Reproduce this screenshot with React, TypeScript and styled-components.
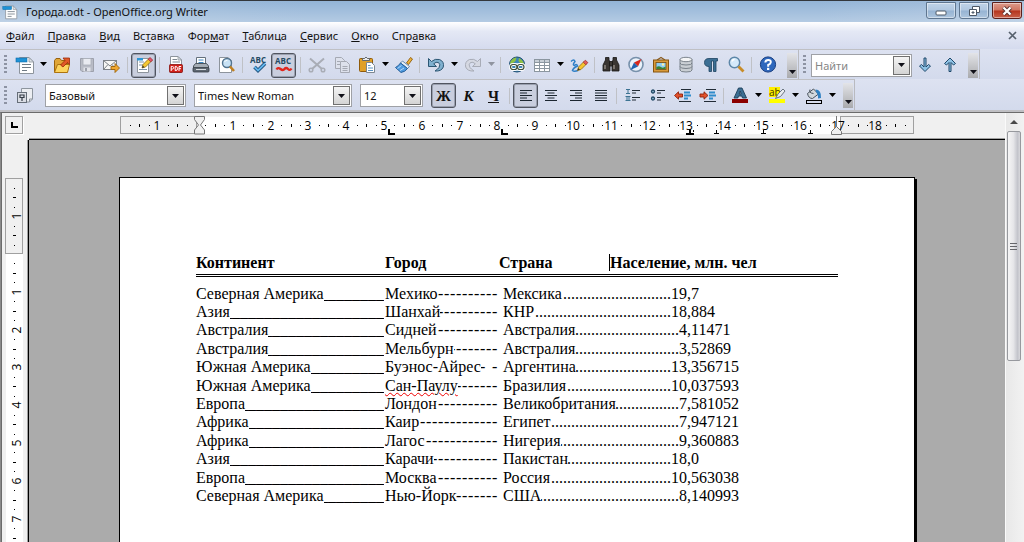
import React from "react";
import styled, { createGlobalStyle, css } from "styled-components";

const GlobalStyle = createGlobalStyle`
  * { box-sizing: border-box; }
  html, body { margin: 0; height: 100%; }
  body { font: 12px/16px "Noto Sans", "Open Sans", sans-serif; color: #101018; background: #f0f0f0; }
  button, input, select { font: inherit; color: inherit; }
`;

const Window = styled.div`
  display: flex;
  flex-direction: column;
  height: 100vh;
  overflow: hidden;
`;

const TitleBar = styled.header`
  display: flex;
  flex: none;
  height: 22px;
  padding: 0 2px;
  border-top: 1px solid #33373c;
  background: linear-gradient(to bottom, rgba(255, 255, 255, 0), rgba(255, 255, 255, 0.3)),
    linear-gradient(to right, #a3bedb, #93b4d7 30%, #93b4d7 80%, #a6c0dc);
`;

const Title = styled.h1`
  display: flex;
  align-items: center;
  gap: 8px;
  flex: 1;
  margin: 0;
  font-size: 11px;
  font-weight: 400;
  line-height: 20px;
  color: #111;
`;

const WindowButtons = styled.div`
  display: flex;
  gap: 3px;
  padding-top: 1px;
`;

const WindowButton = styled.button<{ $close?: boolean }>`
  width: 30px;
  height: 17px;
  padding: 0;
  border: 1px solid ${(p) => (p.$close ? "#5b1f1b" : "#5f7690")};
  border-radius: 0 0 3px 3px;
  box-shadow: inset 0 0 0 1px rgba(255, 255, 255, 0.45);
  background: ${(p) =>
    p.$close
      ? "linear-gradient(#dc9a8b, #cf7460 48%, #b5341d 52%, #c8614a)"
      : "linear-gradient(#c0d3e8, #b0c7e0 48%, #96b3d3 52%, #adc5de)"};
  svg { display: block; margin: auto; }
`;

const MenuBar = styled.nav`
  display: flex;
  flex: none;
  align-items: center;
  gap: 13px;
  height: 27px;
  padding: 0 7px 0 6px;
  background: linear-gradient(#ffffff, #e4e8f5 35%, #d5dbee);
`;

const MenuItem = styled.button`
  padding: 0;
  border: 0;
  background: none;
  font-size: 11px;
  color: #111;
`;

const CloseDocument = styled(MenuItem)`
  display: flex;
  margin-left: auto;
`;

const ToolRow = styled.div<{ $lower?: boolean }>`
  display: flex;
  flex: none;
  height: ${(p) => (p.$lower ? 31 : 30)}px;
  background: linear-gradient(#dde2f1, #d3daec);
`;

const Toolbar = styled.div`
  display: flex;
  align-items: center;
  padding: 1px 1px 0 4px;
  border-top: 1px solid #bfc0c4;
  border-right: 1px solid #b9babf;
`;

const Grip = styled.span`
  width: 3px;
  height: 20px;
  margin-right: 5px;
  background: repeating-linear-gradient(#8d93a3 0 2px, transparent 2px 4px);
`;

const ToolButton = styled.button<{ $pressed?: boolean; $space?: number }>`
  display: flex;
  flex: none;
  align-items: center;
  justify-content: center;
  width: 25px;
  height: 25px;
  margin-right: ${(p) => p.$space ?? 0}px;
  padding: 0;
  border: 1px solid transparent;
  border-radius: 3px;
  background: none;
  color: #111;
  ${(p) =>
    p.$pressed &&
    css`
      border-color: #50545f;
      background: #c9cede;
      box-shadow: inset 0 0 0 1px #9aa0af;
    `}
`;

const LetterButton = styled(ToolButton)<{ $italic?: boolean; $underline?: boolean }>`
  font: ${(p) => (p.$italic ? "italic" : "normal")} bold 15px/20px "Liberation Serif", serif;
  text-decoration: ${(p) => (p.$underline ? "underline" : "none")};
`;

const CaretButton = styled.button<{ $disabled?: boolean }>`
  display: flex;
  flex: none;
  align-items: center;
  justify-content: center;
  width: 12px;
  height: 25px;
  padding: 0 0 2px;
  border: 0;
  background: none;
  color: ${(p) => (p.$disabled ? "#8f949f" : "#000")};
`;

const Separator = styled.span<{ $wide?: boolean }>`
  flex: none;
  width: 1px;
  height: 16px;
  margin: 0 3px 0 ${(p) => (p.$wide ? 4 : 3)}px;
  background: #bfc1c6;
`;

const Overflow = styled.button<{ $gap: number }>`
  display: flex;
  flex: none;
  align-items: flex-end;
  justify-content: center;
  width: 10px;
  height: 25px;
  margin-left: ${(p) => p.$gap}px;
  padding: 0 0 4px;
  border: 0;
  background: linear-gradient(#e3e4e8, #a9aaad);
`;

const Combo = styled.div<{ $width: number; $gap?: number }>`
  position: relative;
  flex: none;
  width: ${(p) => p.$width}px;
  height: 23px;
  margin-right: ${(p) => p.$gap ?? 8}px;
  border: 1px solid #9fa1a6;
  background: #fff;
`;

const Field = styled.select`
  width: 100%;
  height: 21px;
  padding: 0 20px 0 3px;
  border: 0;
  appearance: none;
  background: none;
  font-size: 11px;
  line-height: 20px;
  color: #111;
`;

const SearchField = styled.input`
  width: 100%;
  height: 21px;
  padding: 0 20px 0 3px;
  border: 0;
  background: none;
  font-size: 11px;
  &::placeholder { color: #868686; opacity: 1; }
`;

const ComboArrow = styled.span`
  position: absolute;
  top: 1px;
  right: 1px;
  bottom: 1px;
  display: flex;
  align-items: center;
  justify-content: center;
  width: 17px;
  border: 1px solid #707070;
  background: linear-gradient(#f4f4f4, #d4d4d4);
  pointer-events: none;
`;

const BodyEdge = styled.div`
  flex: none;
  height: 2px;
  background: #c0c0c4;
`;

const Body = styled.main`
  display: grid;
  flex: 1;
  min-height: 0;
  grid-template-columns: 28px minmax(0, 1fr) 19px;
  grid-template-rows: 27px minmax(0, 1fr);
  border-top: 1px solid #6b6b6b;
  border-left: 1px solid #8a8a8a;
  background: #f0f0f0;
`;

const Corner = styled.div`
  padding: 3px 0 0 3px;
  border-left: 1px solid #6b6b6b;
`;

const TabTypeButton = styled.button`
  display: flex;
  align-items: center;
  justify-content: center;
  width: 18px;
  height: 18px;
  padding: 0;
  border: 1px solid #a0a0a0;
  box-shadow: 1px 1px 0 #fff;
  background: #f0f0f0;
`;

const TopRuler = styled.div`
  display: flex;
  justify-content: center;
  padding-top: 3px;
  border-bottom: 1px solid #000;
  box-shadow: inset 0 -1px 0 #a0a0a0;
  svg { flex: none; }
`;

const SideRuler = styled.div`
  overflow: hidden;
  padding: 38px 0 0 3px;
  border-left: 1px solid #6b6b6b;
  border-right: 1px solid #000;
  box-shadow: inset -1px 0 0 #a0a0a0;
  svg { display: block; }
`;

const Workspace = styled.div`
  display: flex;
  justify-content: center;
  align-items: flex-start;
  overflow: hidden;
  padding-top: 37px;
  background: #ababab;
`;

const Paper = styled.article`
  flex: none;
  width: 796px;
  min-height: 1123px;
  padding: 76px;
  border: 1px solid #000;
  box-shadow: 2px 2px 0 #000;
  background: #fff;
  color: #000;
  font: 16px/18px "Liberation Serif", serif;
`;

const Scroll = styled.div`
  grid-column: 3;
  grid-row: 1 / 3;
  display: flex;
  flex-direction: column;
  padding: 0 3px 0 1px;
  border-left: 1px solid #fafafa;
  background: linear-gradient(to right, #e8e8e8, #f2f2f2);
`;

const ScrollUp = styled.button`
  display: flex;
  align-items: center;
  justify-content: center;
  height: 18px;
  padding: 0;
  border: 0;
  background: none;
`;

const ScrollThumb = styled.div`
  display: flex;
  align-items: center;
  justify-content: center;
  height: 230px;
  border: 1px solid #97999e;
  border-radius: 2px;
  background: linear-gradient(to right, #f5f5f5, #e6e6e9 45%, #c3c4cb 80%, #d8d8dc);
`;

const CityTable = styled.table`
  width: 100%;
  border-collapse: collapse;
  table-layout: fixed;
  th, td { padding: 0; font-size: 16px; text-align: left; white-space: nowrap; vertical-align: top; }
  th { height: 21px; line-height: 18px; border-bottom: 3px double #000; }
  tbody tr { height: 18px; }
  tbody tr:nth-child(5n), tbody tr:nth-child(5n + 3) { height: 19px; }
  tbody::before { content: ""; display: table-row; height: 10px; }
`;

const Column = styled.col<{ $width?: number }>`
  width: ${(p) => (p.$width ? `${p.$width}px` : "auto")};
`;

const Tabbed = styled.div<{ $start?: number; $end?: number }>`
  display: flex;
  height: 18px;
  padding: 0 ${(p) => p.$end ?? 0}px 0 ${(p) => p.$start ?? 0}px;
`;

const Leader = styled.span`
  display: flex;
  flex: 1 1 0;
  min-width: 0;
  overflow: hidden;
  justify-content: flex-end;
`;

const DashMark = styled.span`
  flex: none;
  width: 6px;
  white-space: pre;
`;

const Whole = styled.span`
  display: flex;
  flex: none;
  justify-content: flex-end;
  width: 16px;
`;

const InsertionPoint = styled.span`
  display: inline-block;
  width: 1px;
  height: 17px;
  margin: 0 0 0 -1px;
  vertical-align: top;
  background: #000;
`;

const Misspelled = styled.span`
  text-decoration: underline wavy #f00000 1px;
  text-underline-offset: 1px;
`;

const Triangle = () => (
  <svg width="7" height="4" viewBox="0 0 7 4" aria-hidden="true">
    <path d="M0 0H7L3.5 4Z" fill="currentColor" />
  </svg>
);

const Glyph = ({ children, size = 20 }: { children: React.ReactNode; size?: number }) => (
  <svg width={size} height={size} viewBox="0 0 20 20" fill="none" aria-hidden="true">
    {children}
  </svg>
);

const sheet = (
  <>
    <path d="M4.500 2.500H14L18.500 7V18.500H4.500Z" fill="#fff" stroke="#8d949c" />
    <path d="M14 2.500V7H18.500Z" fill="#dfe4e8" stroke="#8d949c" strokeWidth=".8" />
    <path d="M7 9.500H16M7 12.500H16M7 15.500H12" stroke="#6f7a84" />
    <rect x="1" y="3" width="11" height="4" fill="#1e92d6" stroke="#0e6ca8" strokeWidth=".6" />
  </>
);

const page = (
  <>
    <path d="M3.500 2.500H12L15.500 6V17.500H3.500Z" fill="#fff" stroke="#8d949c" />
    <path d="M12 2.500V6H15.500Z" fill="#dfe4e8" stroke="#8d949c" strokeWidth=".8" />
  </>
);

const icons: Record<string, React.ReactNode> = {
  new: sheet,
  open: (
    <>
      <path d="M2.500 17V5.500L4 3.500H8L9.500 5.500H15.500V17Z" fill="#e0a637" stroke="#99620e" />
      <path d="M2.500 17.500L5.500 9.500H17.500L15.500 17.500Z" fill="#fcd45e" stroke="#ad740f" />
      <path d="M8.500 10L13 5.500L11 3H17.500V9.500L15.500 7.500L11 12Z" fill="#e05a28" stroke="#9c2a08" strokeWidth=".8" />
    </>
  ),
  save: (
    <>
      <path d="M3.500 3.500H16.500V16.500H5L3.500 15Z" fill="#b9bcc6" stroke="#9da1ac" />
      <rect x="6" y="3.500" width="8" height="6.500" fill="#e9ebf1" stroke="#a9adb6" strokeWidth=".8" />
      <rect x="6.500" y="12.500" width="7" height="4" fill="#e2e4ea" />
      <rect x="8" y="13" width="2" height="3" fill="#9da1ac" />
    </>
  ),
  mail: (
    <>
      <rect x="1.500" y="5.500" width="13" height="9" fill="#f7f7f5" stroke="#7d8288" />
      <path d="M1.500 5.500L8 11L14.500 5.500M1.500 14.500L6 9.500M14.500 14.500L10 9.500" stroke="#7d8288" />
      <path d="M9 11.500H13V8.500L17.500 13L13 17.500V14.500H9Z" fill="#f0a830" stroke="#9c6208" strokeWidth=".9" />
    </>
  ),
  edit: (
    <>
      <path d="M3.500 3.500H14.500V17.500H3.500Z" fill="#fff" stroke="#8d949c" />
      <path d="M5 7H10M5 10H9M5 14.500H13" stroke="#7b93ab" />
      <rect x="3" y="3" width="6" height="2.500" fill="#2d95d4" />
      <path d="M8 13L9 9.500L15.500 3L18 5.500L11.500 12Z" fill="#f5c832" stroke="#8d6b10" strokeWidth=".8" />
      <path d="M14.200 4.300L16 2.500L18.700 5L16.800 6.800Z" fill="#e4566e" stroke="#9c2236" strokeWidth=".7" />
      <path d="M8 13L8.800 10.500L10.500 12.200Z" fill="#333" />
    </>
  ),
  pdf: (
    <>
      <path d="M4.500 1.500H12L15.500 5V17.500H4.500Z" fill="#fff" stroke="#8d949c" />
      <path d="M12 1.500V5H15.500Z" fill="#dfe4e8" stroke="#8d949c" strokeWidth=".8" />
      <path d="M6.500 4.500H11M6.500 7H14" stroke="#7e8891" />
      <rect x="3.500" y="9.500" width="13" height="8" rx="1" fill="#d1201a" stroke="#86100c" strokeWidth=".8" />
      <path
        d="M5.200 16V11.500H6.500Q7.700 11.500 7.700 12.700T6.500 14H5.200M9.200 11.500V15.500H10Q11.500 15.400 11.500 13.600T10 11.500ZM13 16V11.500H15.200M13 13.700H15"
        stroke="#fff"
        strokeWidth="1"
      />
    </>
  ),
  print: (
    <>
      <path d="M5.500 9V2.500H14.500V9" fill="#fff" stroke="#65717d" />
      <path d="M7.500 5H12.500M7.500 7.500H12.500" stroke="#3f86c0" />
      <path d="M2.500 15V11L4.500 8.500H15.500L17.500 11V15Z" fill="#a5adb5" stroke="#4d565f" />
      <rect x="2" y="12.500" width="16" height="4.500" rx="1" fill="#5f6872" stroke="#363d45" strokeWidth=".8" />
      <path d="M5 14.500H15" stroke="#d9dee2" />
    </>
  ),
  preview: (
    <>
      {page}
      <circle cx="11" cy="8" r="4.500" fill="#c8e2f5" stroke="#51738f" strokeWidth="1.400" />
      <path d="M14 11.500L18 16" stroke="#c08022" strokeWidth="2.600" />
      <path d="M8.500 7Q9.500 5 11.500 5.200" stroke="#fff" />
    </>
  ),
  cut: (
    <g stroke="#a9adb6">
      <path d="M3 3.500L15 14M17 3.500L5 14" strokeWidth="2" />
      <circle cx="4" cy="15" r="1.800" strokeWidth="1.500" />
      <circle cx="16" cy="15" r="1.800" strokeWidth="1.500" />
    </g>
  ),
  copy: (
    <g stroke="#a5a9b3" fill="#dde1ec">
      <path d="M3.500 2.500H9.500L12.500 5.500V13.500H3.500Z" />
      <path d="M8.500 6.500H14.500L17.500 9.500V17.500H8.500Z" />
      <path d="M5 6.500H8M5 9.500H8M10.500 11.500H15.500M10.500 13.500H15.500M10.500 15.500H15.500" />
    </g>
  ),
  paste: (
    <>
      <rect x="2.500" y="3.500" width="13" height="13" rx="1" fill="#e0a028" stroke="#8f5b0a" />
      <path d="M5.500 5.500V3.500H7.500Q9 .500 10.500 3.500H12.500V5.500Z" fill="#e9ebee" stroke="#565d66" strokeWidth=".9" />
      <path d="M9.500 7.500H14.500L17.500 10.500V17.500H9.500Z" fill="#fff" stroke="#7d8790" />
      <path d="M11 10.500H13.500M11 13H16M11 15.500H16" stroke="#5a93c4" />
    </>
  ),
  brush: (
    <>
      <path d="M12.500 8L16.500 2.500L18.500 4L14.500 9.500Z" fill="#f0b63c" stroke="#8f5b0a" strokeWidth=".9" />
      <path d="M8.500 6L15.500 11.500L13.500 13.500L6.500 8Z" fill="#e6eef6" stroke="#4874a0" strokeWidth=".8" />
      <path d="M6.500 8L13.500 13.500Q11 17 7 17.500L1.500 12.500Q4.500 11 6.500 8Z" fill="#4f9be0" stroke="#1c5590" strokeWidth=".9" />
      <path d="M3.500 13.500L7.500 10.500M6 15.500L10 13" stroke="#b8dafa" />
    </>
  ),
  undo: (
    <path
      d="M2.500 3.500V11.500H10.500L7.700 8.800Q10 6.500 12.500 7.500Q15 9.500 13 12.500Q12 14 9 16Q15.500 16.500 17.300 12Q18.500 6.500 13.500 4.500Q9 3.300 5.500 6.500Z"
      fill="#7fb0cf"
      stroke="#2c5673"
    />
  ),
  redo: (
    <path
      d="M17.500 3.500V11.500H9.500L12.300 8.800Q10 6.500 7.500 7.500Q5 9.500 7 12.500Q8 14 11 16Q4.500 16.500 2.700 12Q1.500 6.500 6.500 4.500Q11 3.300 14.500 6.500Z"
      fill="#d5d8e2"
      stroke="#a8acb7"
    />
  ),
  link: (
    <>
      <circle cx="10" cy="9.500" r="7.500" fill="#3e86b6" stroke="#1d4c70" />
      <path d="M3.500 6.500Q6 2.500 9.500 2.500L8.500 6L5.500 8.500L3 9ZM12 3Q16 5 17 9L13.500 8.500L11.500 6Z" fill="#8fc043" />
      <rect x="3.500" y="9.500" width="7" height="5" rx="2.500" stroke="#fff" strokeWidth="3" />
      <rect x="10" y="9.500" width="7" height="5" rx="2.500" stroke="#fff" strokeWidth="3" />
      <rect x="3.500" y="9.500" width="6.500" height="5" rx="2.500" stroke="#3f4f3a" strokeWidth="1.200" />
      <rect x="10.500" y="9.500" width="6.500" height="5" rx="2.500" stroke="#3f4f3a" strokeWidth="1.200" />
    </>
  ),
  table: (
    <>
      <rect x="2.500" y="4.500" width="15" height="12" fill="#fff" stroke="#8b969f" />
      <rect x="3" y="5" width="14" height="2" fill="#c8cfd6" />
      <path d="M2.500 7.500H17.500M2.500 10.500H17.500M2.500 13.500H17.500M7.500 4.500V16.500M12.500 4.500V16.500" stroke="#8b969f" />
    </>
  ),
  draw: (
    <>
      <path d="M2 6.500Q5 3.500 6 6.500Q3 10 5.500 10.500Q8 8.500 8.500 11Q4 13 3.500 15.500Q5 17 9 15.500" stroke="#2f7fc6" strokeWidth="1.500" />
      <path d="M8.500 15.500L9.500 12L15 6.500L17.500 9L12 14.500Z" fill="#f6c530" stroke="#906a0e" strokeWidth=".8" />
      <path d="M14.300 7.200L16.300 5.200L18.900 7.600L16.800 9.700Z" fill="#e2605e" stroke="#9c2424" strokeWidth=".7" />
      <path d="M8.500 15.500L9.200 13L11 14.800Z" fill="#333" />
    </>
  ),
  find: (
    <g fill="#3a3632" stroke="#181614" strokeWidth=".8">
      <path d="M4.500 2.500H8V5L9 7V16H2V10L4.500 5Z" />
      <path d="M15.500 2.500H12V5L11 7V16H18V10L15.500 5Z" />
      <path d="M8.500 6.500H11.500V11H8.500Z" />
      <path d="M4 10V14M13 10V14" stroke="#a39c94" strokeWidth="1.200" />
    </g>
  ),
  compass: (
    <>
      <circle cx="10" cy="9.500" r="7" fill="#eaf2fa" stroke="#7791ab" strokeWidth="1.600" />
      <path d="M15.500 4L12 11.500L8 7.500Z" fill="#d8291c" />
      <path d="M4.500 15L8 7.500L12 11.500Z" fill="#2263ae" />
    </>
  ),
  gallery: (
    <>
      <path d="M6 5L10 2.500L14 5" stroke="#8a5a1c" strokeWidth="1.200" />
      <rect x="2.500" y="5" width="15" height="12" fill="#d99a3a" stroke="#85540f" />
      <rect x="5" y="7.500" width="10" height="7" fill="#8fcdf2" stroke="#74490c" strokeWidth=".8" />
      <path d="M5.400 12Q8 10.500 10 12T14.600 11.500V14.100H5.400Z" fill="#3d8230" />
      <circle cx="12" cy="9.500" r="1.200" fill="#fff3a0" />
    </>
  ),
  database: (
    <g fill="#dfe2e5" stroke="#6f7881" strokeWidth=".9">
      <path d="M4 4.500V15Q4 17 10 17T16 15V4.500Z" fill="#c9ced3" />
      <path d="M4 8Q4 10 10 10T16 8M4 11.500Q4 13.500 10 13.500T16 11.500" fill="none" />
      <ellipse cx="10" cy="4.500" rx="6" ry="2.200" fill="#f4f5f6" />
    </g>
  ),
  pilcrow: (
    <path d="M16.500 3.500H8Q3.500 3.500 3.500 7.500T8 11.500V16.500H10.500V6H12.500V16.500H15V6H16.500Z" fill="#3c6f94" stroke="#1d435f" strokeWidth=".8" />
  ),
  zoom: (
    <>
      <circle cx="8.500" cy="7.500" r="5.200" fill="#d5eafa" stroke="#5d87a8" strokeWidth="1.500" />
      <path d="M12.500 11.500L17.500 16.500" stroke="#c88c28" strokeWidth="2.800" />
      <path d="M5.800 6.500Q6.500 4.500 8.500 4.500" stroke="#fff" strokeWidth="1.300" />
    </>
  ),
  help: (
    <>
      <circle cx="10" cy="9.500" r="7.600" fill="#2f68bd" stroke="#173d80" />
      <path d="M7.300 7.500Q7.500 5 10.200 5T12.800 7.300Q12.700 8.800 10.200 10V11.700" stroke="#fff" strokeWidth="2" />
      <rect x="9" y="12.800" width="2.300" height="2.200" fill="#fff" />
    </>
  ),
  down: (
    <path d="M9 3H11V12L13.500 9.500L15.500 11L10 16.500L4.500 11L6.500 9.500L9 12Z" fill="#8fc3e6" stroke="#20486a" />
  ),
  up: (
    <path d="M9 16.500H11V7.500L13.500 10L15.500 8.500L10 3L4.500 8.500L6.500 10L9 7.500Z" fill="#8fc3e6" stroke="#20486a" />
  ),
  styles: (
    <>
      <path d="M6.500 2.500H17.500V13L14.500 16H6.500Z" fill="#eceef2" stroke="#8d959e" />
      <path d="M14.500 16V13H17.500" stroke="#8d959e" />
      <rect x="2.500" y="6.500" width="9" height="10" fill="#dadde4" stroke="#666e78" />
      <path d="M5 11.500V9H9V11.500ZM7 11.500V15" stroke="#343c46" strokeWidth="1.200" />
    </>
  ),
  alignLeft: <path d="M4 4.500H16M4 7H11M4 9.500H16M4 12H11M4 14.500H16" stroke="#1c2630" strokeWidth="1.200" />,
  alignCenter: <path d="M4 4.500H16M6.500 7H13.500M4 9.500H16M6.500 12H13.500M4 14.500H16" stroke="#1c2630" strokeWidth="1.200" />,
  alignRight: <path d="M4 4.500H16M9 7H16M4 9.500H16M9 12H16M4 14.500H16" stroke="#1c2630" strokeWidth="1.200" />,
  justify: <path d="M4 4.500H16M4 7H16M4 9.500H16M4 12H16M4 14.500H16" stroke="#1c2630" strokeWidth="1.200" />,
  numbered: (
    <>
      <path d="M3 3.500H7M5 3.500V7.500M3 7.500H7M2.500 10.500H7.500M4 10.500V14.500M6 10.500V14.500M2.500 14.500H7.500" stroke="#3c7392" />
      <path d="M9 4.500H17M9 7H13M9 11.500H17M9 14H13" stroke="#222c36" strokeWidth="1.200" />
    </>
  ),
  bullets: (
    <>
      <circle cx="5" cy="5.500" r="1.500" stroke="#234a66" strokeWidth="1.300" fill="#8fb7d0" />
      <circle cx="5" cy="12.500" r="1.500" stroke="#234a66" strokeWidth="1.300" fill="#8fb7d0" />
      <path d="M9 4.500H17M9 7H13M9 11.500H17M9 14H13" stroke="#222c36" strokeWidth="1.200" />
    </>
  ),
  outdent: (
    <>
      <path d="M8 3.500H18M6 15.500H18" stroke="#222c36" />
      <path d="M11 6.500H17M11 9.500H18M11 12.500H15" stroke="#2f8ccc" strokeWidth="2" />
      <path d="M1.500 9.500L5.500 5.800V8H9.500V11H5.500V13.200Z" fill="#e2522c" stroke="#8f210a" strokeWidth=".9" />
    </>
  ),
  indent: (
    <>
      <path d="M8 3.500H18M6 15.500H18" stroke="#222c36" />
      <path d="M11 6.500H17M11 9.500H18M11 12.500H15" stroke="#2f8ccc" strokeWidth="2" />
      <path d="M10 9.500L6 5.800V8H2V11H6V13.200Z" fill="#e2522c" stroke="#8f210a" strokeWidth=".9" />
    </>
  ),
  fontColor: (
    <>
      <path d="M4 12L8.500 2H12L16.500 12H12.500L11.800 10H8.500L7.800 12ZM9.200 8H11.200L10.200 5Z" fill="#3c6f94" stroke="#1b3d57" strokeWidth=".9" />
      <rect x="2" y="13" width="16" height="4" fill="#8b0000" />
    </>
  ),
  fill: (
    <>
      <path d="M3.500 7.500L9.500 3L14.500 8L8.500 12.500Q4.500 12.500 3.500 7.500Z" fill="#d2d8dd" stroke="#48525c" />
      <path d="M6 3.500Q4.500 7 9.500 7.500" stroke="#48525c" />
      <path d="M11.500 3.500Q17.500 3.500 17 12L14 12.500Q14.500 8.500 12 6Z" fill="#2f80c2" />
      <rect x="2.500" y="14.500" width="15" height="3" fill="#d5dbed" stroke="#000" />
    </>
  ),
};

const AbcText = styled.text`
  font: bold 8px "Open Sans", sans-serif;
  fill: #244a63;
`;

icons.spell = (
  <>
    <AbcText x="1" y="8">ABC</AbcText>
    <path d="M5.500 12L9 15.500L16 8.500" stroke="#174a76" strokeWidth="3.600" />
    <path d="M5.500 12L9 15.500L16 8.500" stroke="#62b5ec" strokeWidth="1.800" />
  </>
);
icons.autospell = (
  <>
    <AbcText x="1" y="9">ABC</AbcText>
    <path d="M2.500 14.500Q4 12 6.500 14T10.500 14T14 14T17.500 13.500" stroke="#e1261c" strokeWidth="2.400" />
  </>
);

const HighlightText = styled.text`
  font: 10px "Open Sans", sans-serif;
  fill: #3d3400;
`;
icons.highlight = (
  <>
    <rect x="2" y="1" width="11" height="10" fill="#ffee00" />
    <HighlightText x="2" y="10">ab</HighlightText>
    <path d="M8.500 12.500L11 8L16 3L18 5L13.500 10.500Z" fill="#e9ecef" stroke="#5e6973" strokeWidth=".9" />
    <rect x="2" y="13" width="16" height="4" fill="#ffff00" />
  </>
);

type Tool =
  | { kind: "button"; icon: string; label: string; pressed?: boolean }
  | { kind: "caret"; label: string; disabled?: boolean }
  | { kind: "gap"; wide?: boolean };

const b = (icon: string, label: string, pressed?: boolean): Tool => ({ kind: "button", icon, label, pressed });
const c = (label: string, disabled?: boolean): Tool => ({ kind: "caret", label, disabled });
const gap = (wide?: boolean): Tool => ({ kind: "gap", wide });

const standardTools: Tool[] = [
  b("new", "Создать"), c("Виды документов"), b("open", "Открыть"), b("save", "Сохранить"), b("mail", "Отправить"), gap(),
  b("edit", "Правка файла", true), gap(), b("pdf", "Экспорт в PDF"), b("print", "Печать"), b("preview", "Просмотр"), gap(true),
  b("spell", "Орфография"), b("autospell", "Автопроверка", true), gap(true),
  b("cut", "Вырезать"), b("copy", "Копировать"), b("paste", "Вставить"), c("Варианты вставки"), b("brush", "Формат по образцу"), gap(),
  b("undo", "Отменить"), c("История отмены"), b("redo", "Вернуть"), c("История возврата", true), gap(),
  b("link", "Гиперссылка"), b("table", "Таблица"), c("Размер таблицы"), b("draw", "Рисование"), gap(),
  b("find", "Найти и заменить"), b("compass", "Навигатор"), b("gallery", "Галерея"), b("database", "Источники данных"),
  b("pilcrow", "Непечатаемые символы"), b("zoom", "Масштаб"), gap(), b("help", "Справка"),
];

const paragraphTools: Tool[] = [
  gap(), b("alignLeft", "По левому краю", true), b("alignCenter", "По центру"), b("alignRight", "По правому краю"),
  b("justify", "По ширине"), gap(), b("numbered", "Нумерация"), b("bullets", "Маркеры"), b("outdent", "Уменьшить отступ"),
  b("indent", "Увеличить отступ"), gap(), b("fontColor", "Цвет шрифта"), c("Выбор цвета шрифта"),
  b("highlight", "Цвет выделения"), c("Выбор цвета выделения"), b("fill", "Цвет фона"), c("Выбор цвета фона"),
];

const Tools = ({ items }: { items: Tool[] }) => (
  <>
    {items.map((t, i) =>
      t.kind === "gap" ? (
        <Separator key={i} $wide={t.wide} />
      ) : t.kind === "caret" ? (
        <CaretButton key={i} aria-label={t.label} $disabled={t.disabled}><Triangle /></CaretButton>
      ) : (
        <ToolButton key={i} aria-label={t.label} $pressed={t.pressed}><Glyph>{icons[t.icon]}</Glyph></ToolButton>
      )
    )}
  </>
);

const SelectBox = ({ label, value, width }: { label: string; value: string; width: number }) => (
  <Combo $width={width}>
    <Field aria-label={label} defaultValue={value}>
      <option>{value}</option>
    </Field>
    <ComboArrow><Triangle /></ComboArrow>
  </Combo>
);

const RulerNumber = styled.text`
  font: 12px "Open Sans", sans-serif;
  text-anchor: middle;
  fill: #000;
`;

const CM = 37.8;
const range = (from: number, to: number) => Array.from({ length: to - from + 1 }, (_, i) => from + i);
const at = (cm: number) => Math.round(76 + cm * CM);

const HorizontalRuler = () => (
  <svg width="794" height="22" viewBox="0 0 794 22" role="img" aria-label="Горизонтальная линейка">
    <rect x="75" y="1" width="647" height="17" fill="#fff" />
    <rect x=".5" y=".5" width="76" height="17" fill="#f0f0f0" stroke="#a0a0a0" />
    <rect x="720.5" y=".5" width="73" height="17" fill="#f0f0f0" stroke="#a0a0a0" />
    {range(-7, 75).map((q) => {
      if (q % 4 === 0) return null;
      return q % 2 === 0 ? (
        <rect key={q} x={at(q / 4)} y="8" width="1" height="3" />
      ) : (
        <rect key={q} x={at(q / 4)} y="9" width="1" height="1" />
      );
    })}
    {range(-1, 18).filter((n) => n !== 0).map((n) => (
      <RulerNumber key={n} x={at(n) - 1} y="14">{Math.abs(n)}</RulerNumber>
    ))}
    <path d="M268 13h2v4h5v2h-7ZM381 13h2v4h5v2h-7Z" />
    <path d="M566 17h3v-4h2v4h3v2h-8ZM573 14h1v2h-1ZM594 17h2v-3h1v3h2v1h-5ZM641 17h2v-3h1v3h2v1h-5ZM688 17h2v-3h1v3h2v1h-5Z" />
    <path d="M74.500 .500h10v3l-4 5.500l4 5v4h-10v-4l4-5l-4-5.500Z" fill="#f0f0f0" stroke="#777" />
    <path d="M716.500 0v11" stroke="#777" />
    <path d="M711.500 18.500v-3l5-5l5 5v3Z" fill="#f0f0f0" stroke="#777" />
  </svg>
);

const VerticalRuler = () => (
  <svg width="22" height="1122" viewBox="0 0 22 1122" role="img" aria-label="Вертикальная линейка">
    <rect x="1" y="75" width="17" height="1047" fill="#fff" />
    <rect x=".5" y=".5" width="17" height="75" fill="#f0f0f0" stroke="#a0a0a0" />
    {range(-7, 100).map((q) => {
      if (q % 4 === 0) return null;
      return q % 2 === 0 ? (
        <rect key={q} x="8" y={at(q / 4)} width="3" height="1" />
      ) : (
        <rect key={q} x="9" y={at(q / 4)} width="1" height="1" />
      );
    })}
    {range(-1, 24).filter((n) => n !== 0).map((n) => (
      <RulerNumber key={n} transform={`translate(16 ${at(n)}) rotate(-90)`}>{Math.abs(n)}</RulerNumber>
    ))}
  </svg>
);

type City = {
  continent: string;
  city: string;
  misspelled?: boolean;
  dashes: string;
  country: string;
  dots: number;
  population: string;
};

const cities: City[] = [
  { continent: "Северная Америка", city: "Мехико", dashes: "----------", country: "Мексика", dots: 27, population: "19,7" },
  { continent: "Азия", city: "Шанхай", dashes: "----------", country: "КНР", dots: 34, population: "18,884" },
  { continent: "Австралия", city: "Сидней", dashes: "----------", country: "Австралия", dots: 24, population: "4,11471" },
  { continent: "Австралия", city: "Мельбурн", dashes: "--------", country: "Австралия", dots: 24, population: "3,52869" },
  { continent: "Южная Америка", city: "Буэнос-Айрес", dashes: "- -", country: "Аргентина", dots: 24, population: "13,356715" },
  { continent: "Южная Америка", city: "Сан-Паулу", misspelled: true, dashes: "-------", country: "Бразилия", dots: 26, population: "10,037593" },
  { continent: "Европа", city: "Лондон", dashes: "----------", country: "Великобритания", dots: 14, population: "7,581052" },
  { continent: "Африка", city: "Каир", dashes: "-------------", country: "Египет", dots: 30, population: "7,947121" },
  { continent: "Африка", city: "Лагос", dashes: "------------", country: "Нигерия", dots: 28, population: "9,360883" },
  { continent: "Азия", city: "Карачи", dashes: "-----------", country: "Пакистан", dots: 26, population: "18,0" },
  { continent: "Европа", city: "Москва", dashes: "----------", country: "Россия", dots: 30, population: "10,563038" },
  { continent: "Северная Америка", city: "Нью-Йорк", dashes: "-------", country: "США", dots: 33, population: "8,140993" },
];

const CityRow = ({ row }: { row: City }) => {
  const [whole, fraction] = row.population.split(",");
  return (
    <tr>
      <td><Tabbed $end={1}>{row.continent}<Leader>{"_".repeat(20)}</Leader></Tabbed></td>
      <td>
        <Tabbed $end={1}>
          {row.misspelled ? <Misspelled>{row.city}</Misspelled> : row.city}
          <Leader>
            {Array.from(row.dashes).map((ch, i) => <DashMark key={i}>{ch}</DashMark>)}
          </Leader>
        </Tabbed>
      </td>
      <td colSpan={2}><Tabbed $start={4}>{row.country}<Leader>{".".repeat(row.dots)}</Leader></Tabbed></td>
      <td><Tabbed><Whole>{whole.length < 2 ? ".." : ""}{whole}</Whole>,{fraction}</Tabbed></td>
    </tr>
  );
};

const menus: [string, string, string][] = [
  ["", "Ф", "айл"], ["", "П", "равка"], ["", "В", "ид"], ["Вс", "т", "авка"], ["Фор", "м", "ат"],
  ["", "Т", "аблица"], ["", "С", "ервис"], ["", "О", "кно"], ["Спр", "а", "вка"],
];

export default function App() {
  return (
    <Window>
      <GlobalStyle />
      <TitleBar>
        <Title><Glyph size={16}>{sheet}</Glyph>Города.odt - OpenOffice.org Writer</Title>
        <WindowButtons>
          <WindowButton aria-label="Свернуть">
            <svg width="14" height="12" viewBox="0 0 14 12"><rect x="2" y="6" width="10" height="4" rx="1" fill="#fff" stroke="#4d5866" /></svg>
          </WindowButton>
          <WindowButton aria-label="Восстановить">
            <svg width="14" height="12" viewBox="0 0 14 12" fill="#fff" stroke="#4d5866">
              <path d="M5.500 1.500h7v6h-7Z" /><path d="M2.500 4.500h7v6h-7Z" /><path d="M5 7h2v1h-2Z" fill="#9ab" />
            </svg>
          </WindowButton>
          <WindowButton aria-label="Закрыть" $close>
            <svg width="14" height="12" viewBox="0 0 14 12" fill="none">
              <path d="M3.500 2.500L10.500 9.500M10.500 2.500L3.500 9.500" stroke="#5c3330" strokeWidth="4" />
              <path d="M3.500 2.500L10.500 9.500M10.500 2.500L3.500 9.500" stroke="#fff" strokeWidth="2.200" />
            </svg>
          </WindowButton>
        </WindowButtons>
      </TitleBar>
      <MenuBar>
        {menus.map(([before, key, after]) => (
          <MenuItem key={before + key + after}>{before}<u>{key}</u>{after}</MenuItem>
        ))}
        <CloseDocument aria-label="Закрыть документ">
          <svg width="9" height="9" viewBox="0 0 9 9"><path d="M1 1L8 8M8 1L1 8" stroke="#56606d" strokeWidth="1.700" /></svg>
        </CloseDocument>
      </MenuBar>
      <ToolRow>
        <Toolbar>
          <Grip />
          <Tools items={standardTools} />
          <Overflow $gap={7} aria-label="Ещё"><Triangle /></Overflow>
        </Toolbar>
        <Toolbar>
          <Grip />
          <Combo $width={101} $gap={0}>
            <SearchField aria-label="Найти" placeholder="Найти" />
            <ComboArrow><Triangle /></ComboArrow>
          </Combo>
          <ToolButton aria-label="Найти далее"><Glyph>{icons.down}</Glyph></ToolButton>
          <ToolButton aria-label="Найти ранее"><Glyph>{icons.up}</Glyph></ToolButton>
          <Overflow $gap={6} aria-label="Ещё"><Triangle /></Overflow>
        </Toolbar>
      </ToolRow>
      <ToolRow $lower>
        <Toolbar>
          <Grip />
          <ToolButton aria-label="Стили" $space={8}><Glyph>{icons.styles}</Glyph></ToolButton>
          <SelectBox label="Стиль" value="Базовый" width={141} />
          <SelectBox label="Шрифт" value="Times New Roman" width={158} />
          <SelectBox label="Размер" value="12" width={63} />
          <LetterButton aria-label="Полужирный" $pressed>Ж</LetterButton>
          <LetterButton aria-label="Курсив" $italic>К</LetterButton>
          <LetterButton aria-label="Подчёркнутый" $underline>Ч</LetterButton>
          <Tools items={paragraphTools} />
          <Overflow $gap={5} aria-label="Ещё"><Triangle /></Overflow>
        </Toolbar>
      </ToolRow>
      <BodyEdge />
      <Body>
        <Corner>
          <TabTypeButton aria-label="Тип табуляции">
            <svg width="7" height="6" viewBox="0 0 7 6"><path d="M0 0H2V4H7V6H0Z" /></svg>
          </TabTypeButton>
        </Corner>
        <TopRuler><HorizontalRuler /></TopRuler>
        <Scroll>
          <ScrollUp aria-label="Вверх">
            <svg width="8" height="4" viewBox="0 0 8 4"><path d="M4 0L8 4H0Z" fill="#4a4a4a" /></svg>
          </ScrollUp>
          <ScrollThumb>
            <svg width="8" height="9" viewBox="0 0 8 9"><path d="M0 1.500H7M0 4.500H7M0 7.500H7" stroke="#65666b" /></svg>
          </ScrollThumb>
        </Scroll>
        <SideRuler><VerticalRuler /></SideRuler>
        <Workspace>
          <Paper>
            <CityTable>
              <colgroup>
                <Column $width={189} /><Column $width={114} /><Column $width={111} /><Column $width={61} /><Column />
              </colgroup>
              <thead>
                <tr>
                  <th>Континент</th>
                  <th>Город</th>
                  <th>Страна</th>
                  <th colSpan={2}><InsertionPoint />Население, млн. чел</th>
                </tr>
              </thead>
              <tbody>
                {cities.map((row, i) => <CityRow key={i} row={row} />)}
              </tbody>
            </CityTable>
          </Paper>
        </Workspace>
      </Body>
    </Window>
  );
}
